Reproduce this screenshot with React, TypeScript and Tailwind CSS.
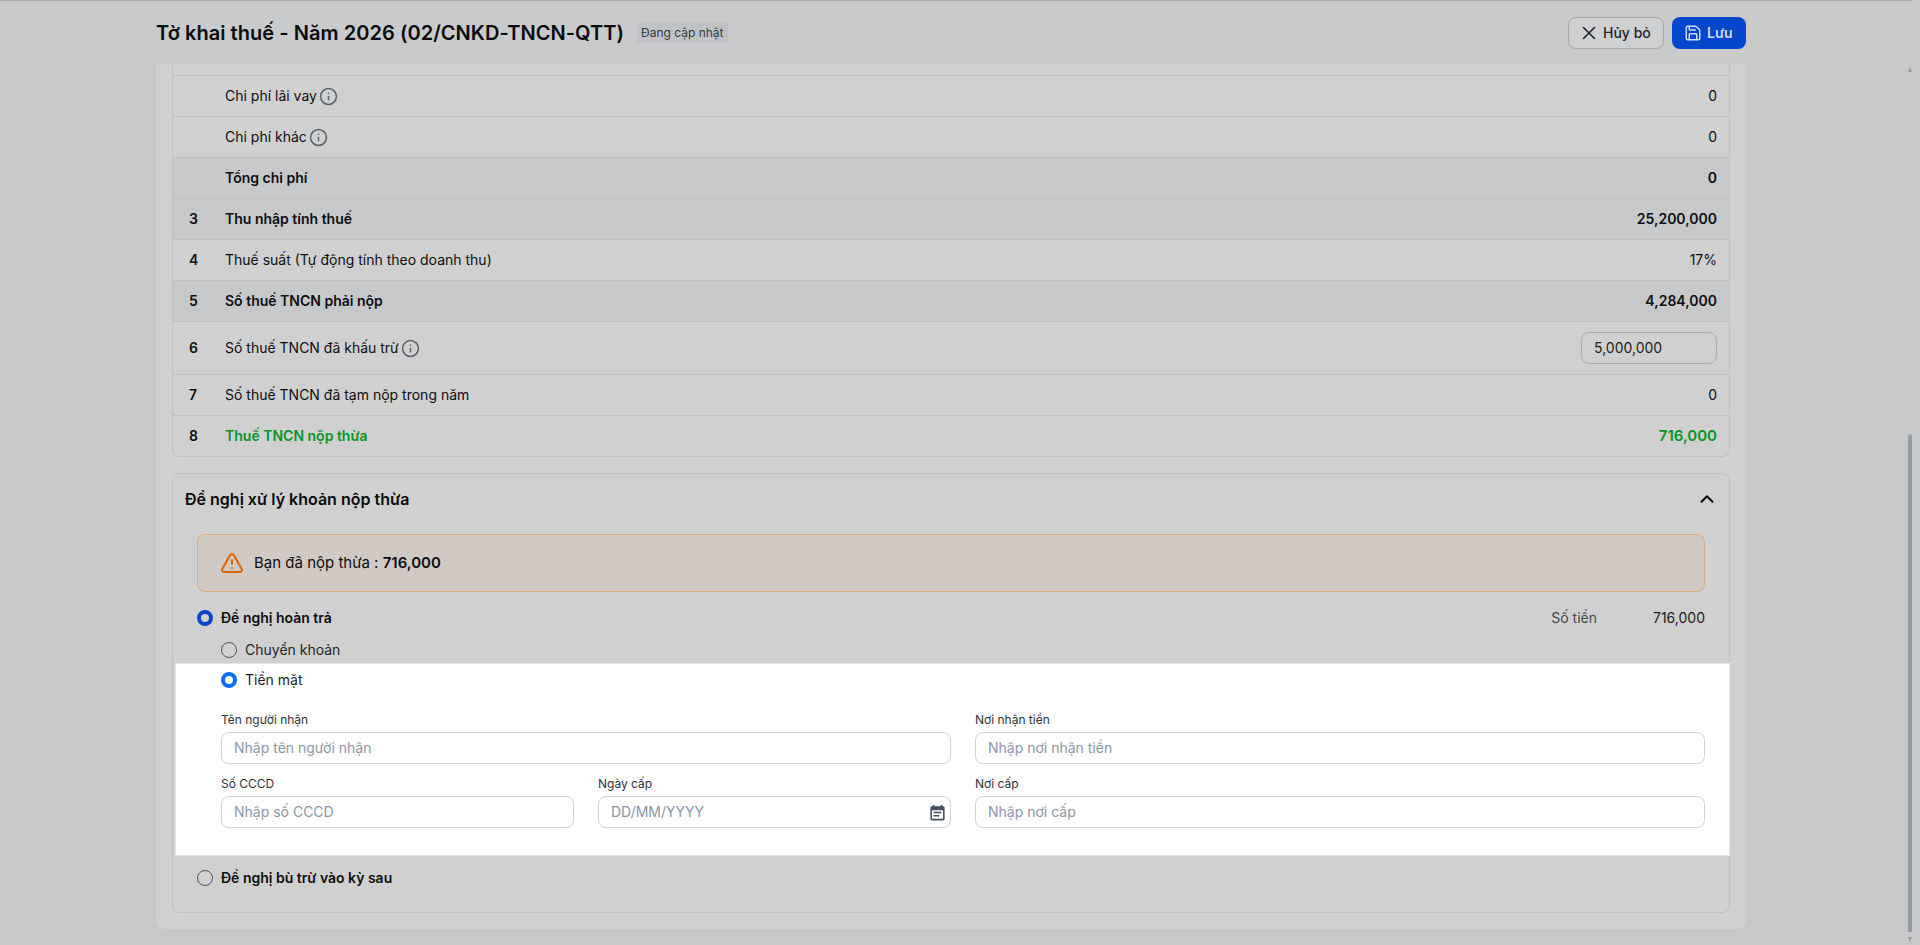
import { Info, X, Save, ChevronUp, TriangleAlert } from "lucide-react";

function Row({ no, label, value, bold, info, green, field, h = "h-[41px]", tint }: any) {
  const weight = bold ? "font-semibold" : "font-normal";
  const color = green ? "text-[#05962a]" : "text-[#0e0f11]";
  return (
    <div className={`flex items-center border-b border-[#bfc0c2] last:border-b-0 pl-[16px] pr-[12px] text-sm ${h} ${tint ? "bg-[#c7c8ca]" : ""}`}>
      <div className="w-[36px] shrink-0 font-semibold text-[#0e0f11]">{no}</div>
      <div className={`flex items-center gap-[2px] ${weight} ${color}`}>
        {label}
        {info && <Info className="w-[19px] h-[19px] text-[#56626f]" strokeWidth={1.9} />}
      </div>
      <div className={`ml-auto ${weight} ${color} ${green ? "text-[15px]" : ""}`}>
        {field ? (
          <div className="w-[136px] h-8 rounded-lg border border-[#a9abb0] px-3 flex items-center text-sm text-[#1c1d20]">{value}</div>
        ) : (
          value
        )}
      </div>
    </div>
  );
}

function Radio({ on, bright }: { on?: boolean; bright?: boolean }) {
  if (on) {
    return <span className={`w-4 h-4 rounded-full border-[4px] shrink-0 ${bright ? "border-[#0a6cff] bg-white" : "border-[#0447cc] bg-[#d0d0d0]"}`} />;
  }
  return <span className="w-4 h-4 rounded-full border border-[#4b5563] shrink-0" />;
}

function Field({ label, placeholder, calendar }: { label: string; placeholder: string; calendar?: boolean }) {
  return (
    <div className="flex-1 min-w-0 flex flex-col">
      <div className="h-[18px] flex items-center text-xs text-[#2e3238] mb-[3px]">{label}</div>
      <div className="h-8 rounded-lg border border-[#d0d3dc] shadow-[0_1px_1px_rgba(16,24,40,0.04)] bg-white px-3 flex items-center text-sm text-[#8a96a8]">
        <span className="flex-1">{placeholder}</span>
        {calendar && (
          <svg viewBox="0 0 24 24" className="w-[19px] h-[19px] -mr-[9px]" fill="none">
            <path
              fill="#46505e"
              d="M19 4h-1V2.5h-2V4H8V2.5H6V4H5a2 2 0 0 0-2 2v14a2 2 0 0 0 2 2h14a2 2 0 0 0 2-2V6a2 2 0 0 0-2-2Zm0 16H5V9h14v11ZM7 11h10v2H7v-2Zm0 4h7v2H7v-2Z"
            />
          </svg>
        )}
      </div>
    </div>
  );
}

export default function App() {
  return (
    <div className="relative h-screen overflow-hidden flex bg-[#c7c8ca] text-[#0e0f11] font-['Inter',sans-serif]">
      <div className="flex-1 min-w-0 flex flex-col">
        <header className="h-16 shrink-0 border-t border-[#a9abae] bg-[#c9cacc] pl-[156px] pr-[166px] flex items-center">
          <h1 className="text-xl font-semibold tracking-[0.05px] text-[#0a0b0d]">Tờ khai thuế - Năm 2026 (02/CNKD-TNCN-QTT)</h1>
          <span className="ml-[13px] h-[21px] px-1 rounded bg-[#c0c2c5] text-xs flex items-center text-[#333b45]">Đang cập nhật</span>
          <div className="ml-auto flex gap-2">
            <button className="h-8 w-24 pl-[9px] rounded-lg border border-[#a4a6aa] bg-[#cfd0d1] flex items-center gap-[3px] text-sm font-medium text-[#22262c]">
              <X className="w-[22px] h-[22px]" strokeWidth={1.75} />
              Hủy bỏ
            </button>
            <button className="h-8 w-[74px] pl-[12px] rounded-lg bg-[#0447cc] flex items-center gap-[5px] text-sm font-semibold text-[#cfdcf5]">
              <Save className="w-[18px] h-[18px]" strokeWidth={2} />
              Lưu
            </button>
          </div>
        </header>

        <main className="flex-1 min-h-0 pl-[156px] pr-[166px]">
          <div className="bg-[#d0d0d0] rounded-b-lg px-4 pb-[16px]">
            <div className="border border-t-0 border-[#bfc0c2] rounded-b-lg">
              <Row h="h-[12px]" />
              <Row label="Chi phí lãi vay" info value="0" />
              <Row label="Chi phí khác" info value="0" />
              <Row label="Tổng chi phí" bold value="0" tint />
              <Row no="3" label="Thu nhập tính thuế" bold value="25,200,000" tint />
              <Row no="4" label="Thuế suất (Tự động tính theo doanh thu)" value="17%" />
              <Row no="5" label="Số thuế TNCN phải nộp" bold value="4,284,000" tint />
              <Row no="6" label="Số thuế TNCN đã khấu trừ" info value="5,000,000" field h="h-[53px]" />
              <Row no="7" label="Số thuế TNCN đã tạm nộp trong năm" value="0" />
              <Row no="8" label="Thuế TNCN nộp thừa" bold green value="716,000" h="h-[40px]" />
            </div>

            <section className="mt-4 border border-[#bfc0c2] rounded-lg">
              <div className="h-[50px] mb-[10px] pl-3 pr-[11px] flex items-center justify-between">
                <h2 className="text-base font-semibold text-[#0a0b0d]">Đề nghị xử lý khoản nộp thừa</h2>
                <ChevronUp className="w-[22px] h-[22px] text-[#0a0b0d]" strokeWidth={2.2} />
              </div>

              <div className="mx-6 h-[58px] rounded-lg border border-[#dcae7c] bg-[#d1c9c3] pl-[22px] pr-6 flex items-center gap-[10px] text-sm">
                <TriangleAlert className="w-6 h-6 text-[#dd6503]" strokeWidth={2} />
                <span className="text-[15px] text-[#0e0f11]">
                  Bạn đã nộp thừa : <span className="font-semibold">716,000</span>
                </span>
              </div>

              <div className="mx-6 mt-[15px] h-[22px] flex items-center gap-2 text-sm">
                <Radio on />
                <span className="font-semibold">Đề nghị hoàn trả</span>
                <span className="ml-auto text-[#3e4651]">Số tiền</span>
                <span className="w-[100px] text-right text-[#1c1d20]">716,000</span>
              </div>
              <div className="ml-12 mt-[10px] h-[22px] flex items-center gap-2 text-sm text-[#22262c]">
                <Radio />
                Chuyển khoản
              </div>

              <div className="-mr-px ml-[2px] mt-[2px] h-[193px] bg-white border border-[#e4e5e7] pt-[5px] pl-[45px] pr-[24px]">
                <div className="h-[22px] flex items-center gap-2 text-sm text-[#22262c]">
                  <Radio on bright />
                  Tiền mặt
                </div>
                <div className="mt-[20px] flex gap-6">
                  <Field label="Tên người nhận" placeholder="Nhập tên người nhận" />
                  <Field label="Nơi nhận tiền" placeholder="Nhập nơi nhận tiền" />
                </div>
                <div className="mt-[11px] flex gap-6">
                  <div className="flex-1 min-w-0 flex gap-6">
                    <Field label="Số CCCD" placeholder="Nhập số CCCD" />
                    <Field label="Ngày cấp" placeholder="DD/MM/YYYY" calendar />
                  </div>
                  <Field label="Nơi cấp" placeholder="Nhập nơi cấp" />
                </div>
              </div>

              <div className="mx-6 mt-[11px] mb-[23px] h-[22px] flex items-center gap-2 text-sm font-semibold">
                <Radio />
                Đề nghị bù trừ vào kỳ sau
              </div>
            </section>
          </div>
        </main>
      </div>

      <aside className="w-2 shrink-0 bg-[#cacbcd]" />
      <div className="absolute top-[67px] right-2 w-1 flex flex-col items-center">
        <div className="w-0 h-0 border-x-2 border-x-transparent border-b-[5px] border-b-[#9a9da1]" />
        <div className="mt-[362px] w-1 h-[498px] bg-[#979b9f] rounded-t-[2px]" />
        <div className="mt-[5px] w-0 h-0 border-x-2 border-x-transparent border-t-[5px] border-t-[#9a9da1]" />
      </div>
    </div>
  );
}
